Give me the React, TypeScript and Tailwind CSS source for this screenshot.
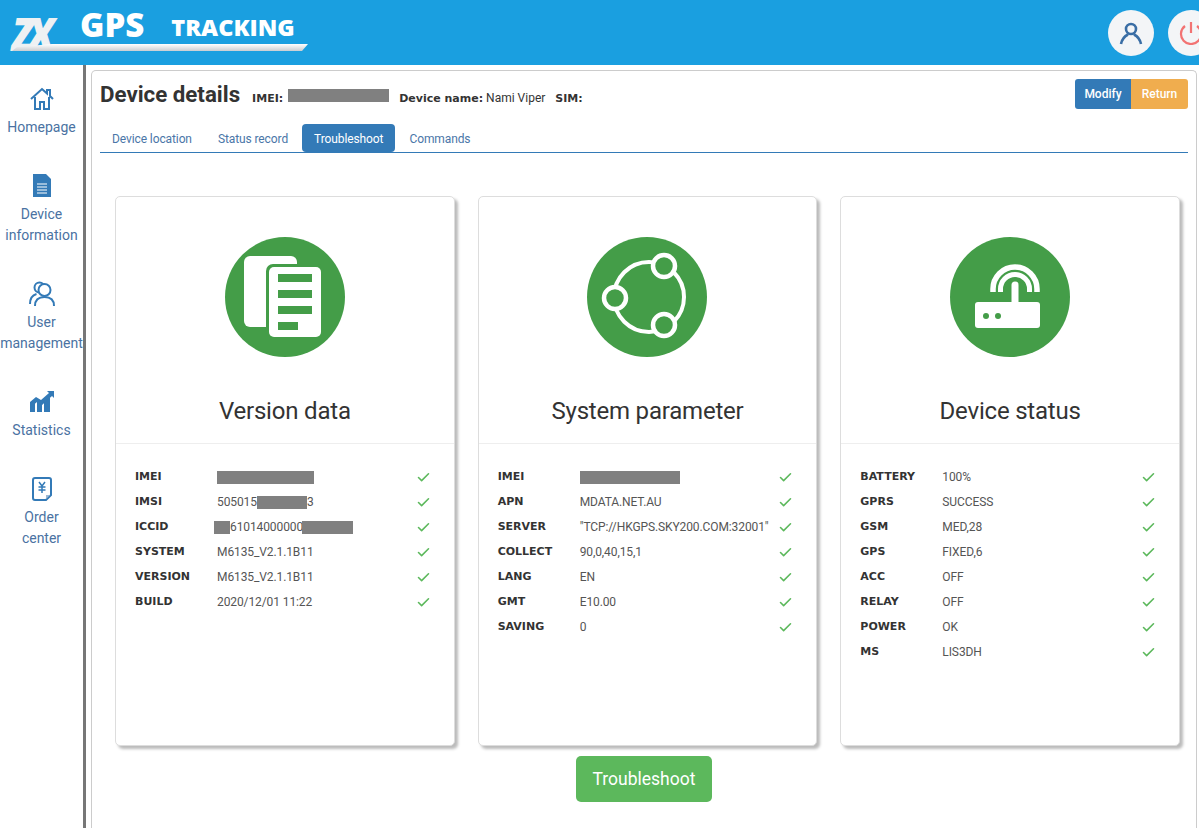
import type { ReactNode } from 'react';
import { Check } from 'lucide-react';

type Row = { label: string; value: ReactNode };

const Bar = ({ className }: { className: string }) => (
  <span className={`inline-block h-[13px] align-middle bg-[#808080] ${className}`} />
);

const versionRows: Row[] = [
  { label: 'IMEI', value: <Bar className="w-[97px]" /> },
  { label: 'IMSI', value: <>505015<Bar className="w-[50px]" />3</> },
  { label: 'ICCID', value: <><Bar className="w-[16px] -ml-[3px]" />61014000000<Bar className="w-[51px] -ml-[1px]" /></> },
  { label: 'SYSTEM', value: 'M6135_V2.1.1B11' },
  { label: 'VERSION', value: 'M6135_V2.1.1B11' },
  { label: 'BUILD', value: '2020/12/01 11:22' },
];

const systemRows: Row[] = [
  { label: 'IMEI', value: <Bar className="w-[100px]" /> },
  { label: 'APN', value: 'MDATA.NET.AU' },
  { label: 'SERVER', value: '"TCP://HKGPS.SKY200.COM:32001"' },
  { label: 'COLLECT', value: '90,0,40,15,1' },
  { label: 'LANG', value: 'EN' },
  { label: 'GMT', value: 'E10.00' },
  { label: 'SAVING', value: '0' },
];

const statusRows: Row[] = [
  { label: 'BATTERY', value: '100%' },
  { label: 'GPRS', value: 'SUCCESS' },
  { label: 'GSM', value: 'MED,28' },
  { label: 'GPS', value: 'FIXED,6' },
  { label: 'ACC', value: 'OFF' },
  { label: 'RELAY', value: 'OFF' },
  { label: 'POWER', value: 'OK' },
  { label: 'MS', value: 'LIS3DH' },
];

function VersionIcon() {
  return (
    <svg viewBox="0 0 120 120" className="w-[120px] h-[120px]">
      <circle cx="60" cy="60" r="60" fill="#449d48" />
      <rect x="19" y="19" width="53" height="71" rx="6" fill="#fff" />
      <rect x="41" y="27" width="58" height="76" rx="7" fill="#449d48" />
      <rect x="44" y="30" width="52" height="70" rx="5" fill="#fff" />
      <rect x="53" y="37" width="34" height="8" fill="#449d48" />
      <rect x="53" y="53" width="34" height="8" fill="#449d48" />
      <rect x="53" y="69" width="34" height="8" fill="#449d48" />
      <rect x="53" y="85" width="20" height="8" fill="#449d48" />
    </svg>
  );
}

function SystemIcon() {
  return (
    <svg viewBox="0 0 120 120" className="w-[120px] h-[120px]">
      <circle cx="60" cy="60" r="60" fill="#449d48" />
      <circle cx="62" cy="60" r="35" fill="none" stroke="#fff" strokeWidth="4" />
      {[[28, 61], [77, 29], [77, 88]].map(([x, y]) => (
        <circle key={y} cx={x} cy={y} r="11" fill="#449d48" stroke="#fff" strokeWidth="4.5" />
      ))}
    </svg>
  );
}

function RouterIcon() {
  return (
    <svg viewBox="0 0 120 120" className="w-[120px] h-[120px]">
      <circle cx="60" cy="60" r="60" fill="#449d48" />
      <rect x="25" y="65" width="65" height="26" rx="3" fill="#fff" />
      <circle cx="36" cy="79" r="3" fill="#449d48" />
      <circle cx="48" cy="79" r="3" fill="#449d48" />
      <path d="M65 48v18" stroke="#fff" strokeWidth="7" strokeLinecap="round" />
      <path d="M43 55v-3a22 22 0 0 1 44 0v3" fill="none" stroke="#fff" strokeWidth="5.500" />
      <path d="M50.500 55v-3a14.500 14.500 0 0 1 29 0v3" fill="none" stroke="#fff" strokeWidth="5" />
    </svg>
  );
}

function Card({ icon, title, rows }: { icon: ReactNode; title: string; rows: Row[] }) {
  return (
    <div className="h-[550px] bg-white border border-[#ddd] rounded-[5px] shadow-[3px_3px_3px_#bbb]">
      <div className="h-[247px] border-b border-[#eee] flex flex-col items-center pt-10">
        {icon}
        <h3 className="mt-[37px] text-[24px] leading-[34px] tracking-[-0.2px] text-[#333]">{title}</h3>
      </div>
      <div className="pt-[20px] pl-[19px] pr-[23px]">
        {rows.map((r) => (
          <div key={r.label} className="grid grid-cols-[82px_1fr_auto] items-center h-[25px] text-[12px]">
            <span className="font-bold pt-[2px] text-[11px] font-['DejaVu_Sans',sans-serif] text-[#333]">{r.label}</span>
            <span className="text-[#555] tracking-[-0.1px] whitespace-nowrap">{r.value}</span>
            <Check size={15} strokeWidth={2.500} className="text-[#5cb85c] mt-[1px]" />
          </div>
        ))}
      </div>
    </div>
  );
}

const navIcon = 'w-[26px] h-[26px] text-[#337ab7]';

const navItems: { label: ReactNode; icon: ReactNode }[] = [
  {
    label: 'Homepage',
    icon: (
      <svg viewBox="0 0 26 26" className={navIcon} fill="none" stroke="currentColor" strokeWidth="2">
        <path d="M2 13 13 3l5 4.500V4h3v6l3 3" />
        <path d="M6 11v12h5v-7h4v7h5V11" />
      </svg>
    ),
  },
  {
    label: <>Device<br />information</>,
    icon: (
      <svg viewBox="0 0 26 26" className={navIcon}>
        <path d="M4 1h13l5 5v18H4z" fill="currentColor" />
        <path d="M8 11h10M8 14h10M8 17h10M8 20h10" stroke="#fff" strokeWidth="1" />
      </svg>
    ),
  },
  {
    label: <>User<br />management</>,
    icon: (
      <svg viewBox="0 0 26 26" className={navIcon} fill="none" stroke="currentColor" strokeWidth="2">
        <circle cx="10.500" cy="6.500" r="5" />
        <circle cx="15.500" cy="9" r="6" fill="#fff" />
        <path d="M1 23c0-6 3-9 6.500-10" />
        <path d="M6 25c0-6 3.500-9 9.500-9s9.500 3 9.500 9" />
      </svg>
    ),
  },
  {
    label: 'Statistics',
    icon: (
      <svg viewBox="0 0 26 26" className={navIcon} fill="currentColor">
        <path d="M1 23v-7l5-4v11zM8 23V12l3 2 2-1v10zM15 23V11l3-3 3 1v14z" />
        <path d="M1 13 7 8l5 3 8-7-2-2h7v7l-2-2-10 9-5-3-7 6z" />
      </svg>
    ),
  },
  {
    label: <>Order<br />center</>,
    icon: (
      <svg viewBox="0 0 26 26" className={navIcon} fill="none" stroke="currentColor">
        <path d="M6 2h14a2 2 0 0 1 2 2v15l-5 5H6a2 2 0 0 1-2-2V4a2 2 0 0 1 2-2z" strokeWidth="2" />
        <path d="m10 6 3 4 3-4M9.500 11h7M9.500 14h7M13 10v7" strokeWidth="1.500" />
        <path d="M17 19h4l-4 4z" fill="#9db8d3" stroke="none" />
      </svg>
    ),
  },
];

const tabs = ['Device location', 'Status record', 'Troubleshoot', 'Commands'];

export default function App() {
  return (
    <div className="h-screen overflow-hidden flex flex-col bg-white font-['Roboto',sans-serif]">
      {/* Header */}
      <header className="h-[65px] shrink-0 bg-[#1a9fe0] flex items-center justify-between">
        <div className="relative h-[65px] flex items-start pl-[12px] text-white font-['Open_Sans',sans-serif] font-extrabold">
          <span className="inline-block w-[42px] origin-left scale-x-[0.88] mt-[8px] text-[46px] leading-[50px] italic tracking-[-7px] text-[#eef1f3]">ZX</span>
          <span className="ml-[26px] mt-[5px] text-[33px] leading-[40px]">GPS</span>
          <span className="ml-[27px] mt-[12px] text-[23.500px] leading-[30px]">TRACKING</span>
          <svg viewBox="0 0 296 7" className="absolute left-[12px] top-[44px] w-[296px] h-[7px]">
            <defs>
              <linearGradient id="swoosh" x1="0" y1="0" x2="0" y2="1">
                <stop offset="0" stopColor="#ffffff" />
                <stop offset="1" stopColor="#c9cdd1" />
              </linearGradient>
            </defs>
            <path d="M0 7 5 3 40 0h256l-6 7z" fill="url(#swoosh)" />
          </svg>
        </div>
        <div className="flex items-center gap-[14px] -mr-[15px]">
          <button className="w-[46px] h-[46px] rounded-full bg-[#f3f5f7] flex items-center justify-center">
            <svg viewBox="0 0 24 24" className="w-[24px] h-[24px]" fill="none" stroke="#3a6ea5" strokeWidth="2.600">
              <circle cx="12" cy="8" r="5" />
              <path d="M2 23c1-5 4-8 7-9.500M22 23c-1-5-4-8-7-9.500" />
            </svg>
          </button>
          <button className="w-[46px] h-[46px] rounded-full bg-[#f3f5f7] flex items-center justify-center">
            <svg viewBox="0 0 24 24" className="w-[24px] h-[24px]" fill="none" stroke="#f27373" strokeWidth="2.200">
              <path d="M12 1v11" />
              <path d="M6 5a10 10 0 1 0 12 0" />
            </svg>
          </button>
        </div>
      </header>

      <div className="flex-1 min-h-0 flex">
        {/* Sidebar */}
        <nav className="w-[86px] shrink-0 border-r-[3px] border-[#777] flex flex-col items-center gap-[35px] pt-[21px] text-[14px] leading-[21px] text-[#4a72a2] text-center">
          {navItems.map((item, i) => (
            <div key={i} className="flex flex-col items-center gap-[5px] w-[83px] whitespace-nowrap">
              {item.icon}
              <span>{item.label}</span>
            </div>
          ))}
        </nav>

        {/* Main panel */}
        <main className="flex-1 min-w-0 mt-[5px] ml-[5px] mr-[2px] border border-b-0 border-[#ccc] rounded-t-[5px] px-[8px]">
          <div className="flex items-start justify-between pt-[8px] h-[53px]">
            <div className="flex items-baseline pt-[2px] text-[12px] text-[#333]">
              <h2 className="text-[22.300px] leading-[26px] font-bold text-[#333]">Device details</h2>
              <b className="ml-[12px] text-[11px] font-['DejaVu_Sans',sans-serif]">IMEI:</b>
              <Bar className="w-[101px] ml-[5px]" />
              <b className="ml-[10px] text-[11px] font-['DejaVu_Sans',sans-serif]">Device name:</b>
              <span className="ml-[3px]">Nami Viper</span>
              <b className="ml-[10px] text-[11px] font-['DejaVu_Sans',sans-serif]">SIM:</b>
            </div>
            <div className="flex text-[12px] font-medium text-white">
              <button className="h-[30px] w-[56px] bg-[#337ab7] rounded-l-[3px]">Modify</button>
              <button className="h-[30px] w-[57px] bg-[#f0ad4e] rounded-r-[3px]">Return</button>
            </div>
          </div>

          <div className="flex items-end gap-[2px] border-b border-[#337ab7] h-[29px] text-[12px] tracking-[-0.1px]">
            {tabs.map((t) => (
              <a
                key={t}
                className={`h-[28px] px-[12px] leading-[30px] rounded-t-[4px] ${
                  t === 'Troubleshoot' ? 'bg-[#337ab7] text-white rounded-b-[4px]' : 'text-[#4a76a8]'
                }`}
              >
                {t}
              </a>
            ))}
          </div>

          <div className="grid grid-cols-3 gap-[23px] pl-[15px] pr-[8px] pt-[43px]">
            <Card icon={<VersionIcon />} title="Version data" rows={versionRows} />
            <Card icon={<SystemIcon />} title="System parameter" rows={systemRows} />
            <Card icon={<RouterIcon />} title="Device status" rows={statusRows} />
          </div>

          <div className="flex justify-center pt-[10px]">
            <button className="w-[136px] h-[46px] rounded-[5px] bg-[#5cb85c] text-[17.500px] text-white">Troubleshoot</button>
          </div>
        </main>
      </div>
    </div>
  );
}
